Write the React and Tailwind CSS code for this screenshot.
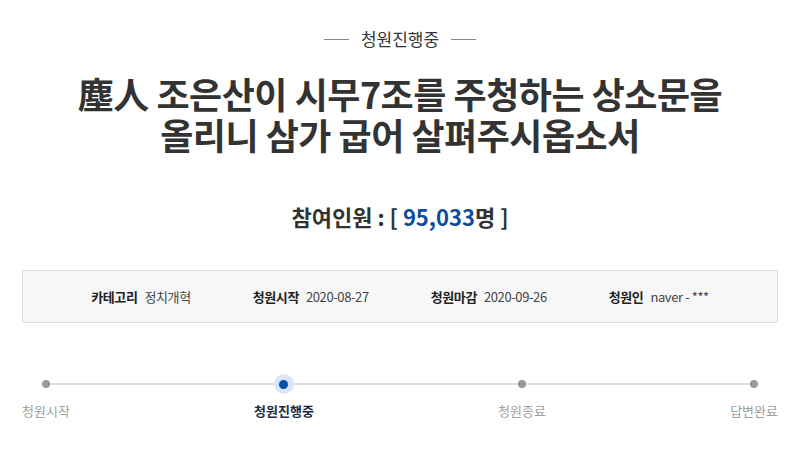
import React from "react";

const steps = [
  { label: "청원시작", active: false },
  { label: "청원진행중", active: true },
  { label: "청원종료", active: false },
  { label: "답변완료", active: false },
];

const info = [
  { k: "카테고리", v: "정치개혁" },
  { k: "청원시작", v: "2020-08-27" },
  { k: "청원마감", v: "2020-09-26" },
  { k: "청원인", v: "naver - ***" },
];

export default function App() {
  return (
    <div
      className="w-[800px] h-[451px] bg-white overflow-hidden"
      style={{ fontFamily: '"Noto Sans CJK KR", "Noto Sans", sans-serif' }}
    >
      {/* 상태 라벨 */}
      <div className="pt-[26px] flex items-center justify-center gap-3">
        <span className="w-[25px] h-px bg-[#888]" />
        <span className="text-[17px] leading-[26px] text-[#333]">청원진행중</span>
        <span className="w-[25px] h-px bg-[#888]" />
      </div>

      {/* 제목 */}
      <h1 className="mt-[21px] text-center text-[36px] leading-[41px] font-bold text-[#333] tracking-[-0.5px]">
        塵人 조은산이 시무7조를 주청하는 상소문을
        <br />
        올리니 삼가 굽어 살펴주시옵소서
      </h1>

      {/* 참여인원 */}
      <div className="mt-[46px] text-center text-[22px] leading-[30px] font-bold text-[#333]">
        참여인원 : [ <span className="text-[#0f4c9c]">95,033</span>명 ]
      </div>

      {/* 정보 박스 */}
      <div className="mx-[22px] mt-[39px] h-[53px] bg-[#f7f7f7] border border-[#dcdcdc] rounded-[2px] flex items-center justify-center gap-[62px]">
        {info.map((it) => (
          <div key={it.k} className="flex items-center gap-[7px] text-[13px] tracking-[-0.4px]">
            <span className="font-bold text-[#222]">{it.k}</span>
            <span className="text-[#444]">{it.v}</span>
          </div>
        ))}
      </div>

      {/* 진행 단계 */}
      <div className="relative mx-[22px] mt-[50px]">
        <div className="absolute left-[24px] right-[26px] top-[10px] h-[2px] bg-[#dcdcdc]" />
        <div className="relative flex justify-between">
          {steps.map((s) => (
            <div key={s.label} className="flex flex-col items-center">
              <div className="h-[22px] flex items-center justify-center">
                {s.active ? (
                  <span className="w-[20px] h-[20px] rounded-full bg-[#d6e7fb] flex items-center justify-center">
                    <span className="w-[9px] h-[9px] rounded-full bg-[#0a4ea8]" />
                  </span>
                ) : (
                  <span className="w-[8px] h-[8px] rounded-full bg-[#999]" />
                )}
              </div>
              <span
                className={
                  s.active
                    ? "mt-[6px] text-[13px] leading-[20px] font-bold text-[#1c2a44]"
                    : "mt-[6px] text-[13px] leading-[20px] text-[#a0a0a0]"
                }
              >
                {s.label}
              </span>
            </div>
          ))}
        </div>
      </div>
    </div>
  );
}
